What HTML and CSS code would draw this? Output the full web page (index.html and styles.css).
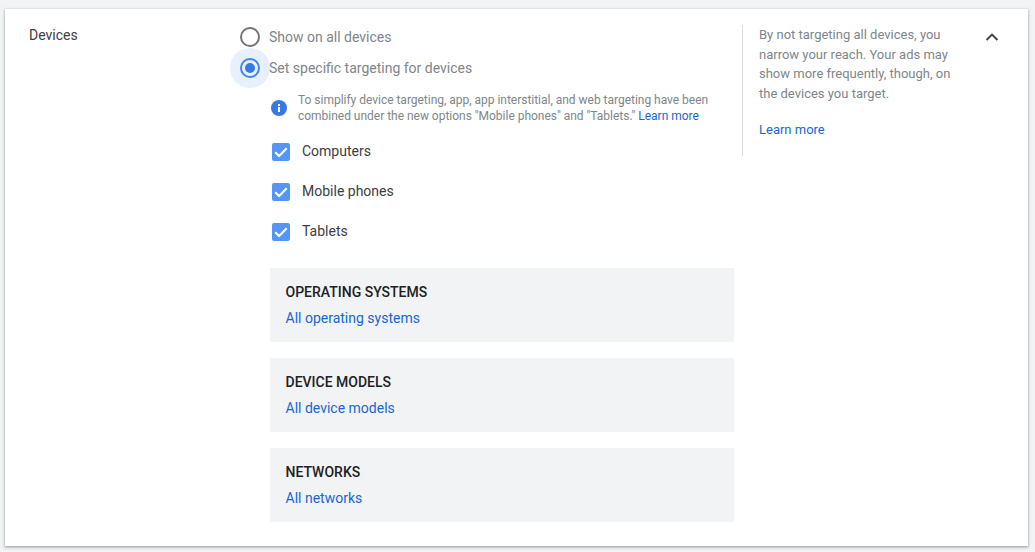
FILE: index.html
```html
<!DOCTYPE html>
<html lang="en">
<head>
<meta charset="utf-8">
<title>Devices</title>
<link rel="stylesheet" href="styles.css">
</head>
<body>
<section class="card">
  <h2 class="title">Devices</h2>
  <div class="main">
    <label class="radio-row">
      <span class="halo"><span class="radio"></span></span>
      <span class="radio-label">Show on all devices</span>
    </label>
    <label class="radio-row radio-row-second">
      <span class="halo halo-on"><span class="radio radio-on"><span class="dot"></span></span></span>
      <span class="radio-label">Set specific targeting for devices</span>
    </label>
    <div class="sub">
      <div class="notice">
        <svg class="info" viewBox="0 0 16 16" width="16" height="16"><circle cx="8" cy="8" r="8" fill="#3b78e7"/><rect x="7" y="7" width="2" height="5" fill="#fff"/><rect x="7" y="4" width="2" height="2" fill="#fff"/></svg>
        <p class="notice-text">To simplify device targeting, app, app interstitial, and web targeting have been combined under the new options "Mobile phones" and "Tablets." <a class="link">Learn more</a></p>
      </div>
      <div class="checks">
        <label class="check-row"><svg class="check" viewBox="0 0 18 18" width="18" height="18"><rect width="18" height="18" rx="2" fill="#5595f8"/><path d="M3.2 9.2l3.9 3.8 7.6-7.8" fill="none" stroke="#fff" stroke-width="2.2"/></svg><span>Computers</span></label>
        <label class="check-row"><svg class="check" viewBox="0 0 18 18" width="18" height="18"><rect width="18" height="18" rx="2" fill="#5595f8"/><path d="M3.2 9.2l3.9 3.8 7.6-7.8" fill="none" stroke="#fff" stroke-width="2.2"/></svg><span>Mobile phones</span></label>
        <label class="check-row"><svg class="check" viewBox="0 0 18 18" width="18" height="18"><rect width="18" height="18" rx="2" fill="#5595f8"/><path d="M3.2 9.2l3.9 3.8 7.6-7.8" fill="none" stroke="#fff" stroke-width="2.2"/></svg><span>Tablets</span></label>
      </div>
      <div class="panels">
        <div class="panel"><div class="panel-title">OPERATING SYSTEMS</div><a class="link panel-link">All operating systems</a></div>
        <div class="panel"><div class="panel-title">DEVICE MODELS</div><a class="link panel-link">All device models</a></div>
        <div class="panel"><div class="panel-title">NETWORKS</div><a class="link panel-link">All networks</a></div>
      </div>
    </div>
  </div>
  <aside class="help">
    <p class="help-text">By not targeting all devices, you narrow your reach. Your ads may show more frequently, though, on the devices you target.</p>
    <a class="link help-link">Learn more</a>
  </aside>
  <svg class="chevron" viewBox="0 0 14 10" width="14" height="10"><path d="M1.5 8L7 2.6 12.5 8" fill="none" stroke="#444" stroke-width="2"/></svg>
</section>
</body>
</html>
```

FILE: styles.css
```css
* { box-sizing: border-box; }
html, body { height: 100%; }
body {
  margin: 0;
  padding: 9px 7px 0 5px;
  background: #f1f3f4;
  font-family: Roboto, "Liberation Sans", sans-serif;
  overflow: hidden;
}
.card {
  display: flex;
  align-items: flex-start;
  height: 537px;
  background: #fff;
  box-shadow: 0 1px 2px rgba(60,64,67,.4), 0 1px 3px 1px rgba(60,64,67,.12);
}
.title {
  flex: 0 0 225px;
  margin: 17px 0 0;
  padding-left: 24px;
  font-size: 14px;
  font-weight: 400;
  line-height: 18px;
  color: #3c4043;
}
.main { flex: 0 0 512px; padding-top: 12px; }
.radio-row { display: flex; align-items: center; height: 32px; }
.radio-row-second { margin-top: -1px; }
.halo {
  flex: none;
  display: flex;
  align-items: center;
  justify-content: center;
  width: 40px;
  height: 40px;
  border-radius: 50%;
  margin: -4px 0;
}
.halo-on { background: #e8f0fe; }
.radio {
  display: flex;
  align-items: center;
  justify-content: center;
  width: 20px;
  height: 20px;
  border: 2px solid #757575;
  border-radius: 50%;
}
.radio-on { border-color: #4285f4; }
.dot { width: 10px; height: 10px; border-radius: 50%; background: #3b78e7; }
.radio-label { margin-left: -1px; font-size: 14px; color: #80868b; }
.sub { padding: 8px 0 0 40px; }
.notice { display: flex; gap: 11px; }
.info { flex: none; margin: 8px 0 0 1px; }
.notice-text {
  margin: 0;
  width: 420px;
  font-size: 12px;
  line-height: 16px;
  letter-spacing: -.02px;
  color: #80868b;
}
.link { color: #1a66d6; text-decoration: none; }
.checks { margin-top: 7px; }
.check-row {
  display: flex;
  align-items: center;
  gap: 12px;
  height: 40px;
  padding-left: 2px;
  font-size: 14px;
  color: #3c4043;
}
.check { flex: none; margin-top: 2px; }
.panels { display: flex; flex-direction: column; gap: 16px; margin-top: 17px; width: 464px; }
.panel {
  height: 74px;
  padding: 16px 15.5px 0;
  background: #f1f3f4;
}
.panel-title { font-size: 14px; font-weight: 500; line-height: 16px; color: #202124; }
.panel-link { display: block; margin-top: 10px; font-size: 14px; line-height: 16px; }
.help {
  flex: 0 0 226px;
  margin-top: 16px;
  height: 131px;
  padding: 0 0 0 16px;
  border-left: 1px solid #dadce0;
}
.help-text {
  margin: 0;
  font-size: 13px;
  line-height: 19.7px;
  color: #80868b;
}
.help-link { display: block; margin-top: 17px; font-size: 13px; line-height: 18px; }
.chevron { flex: none; margin: 23px 0 0 17px; }
```
